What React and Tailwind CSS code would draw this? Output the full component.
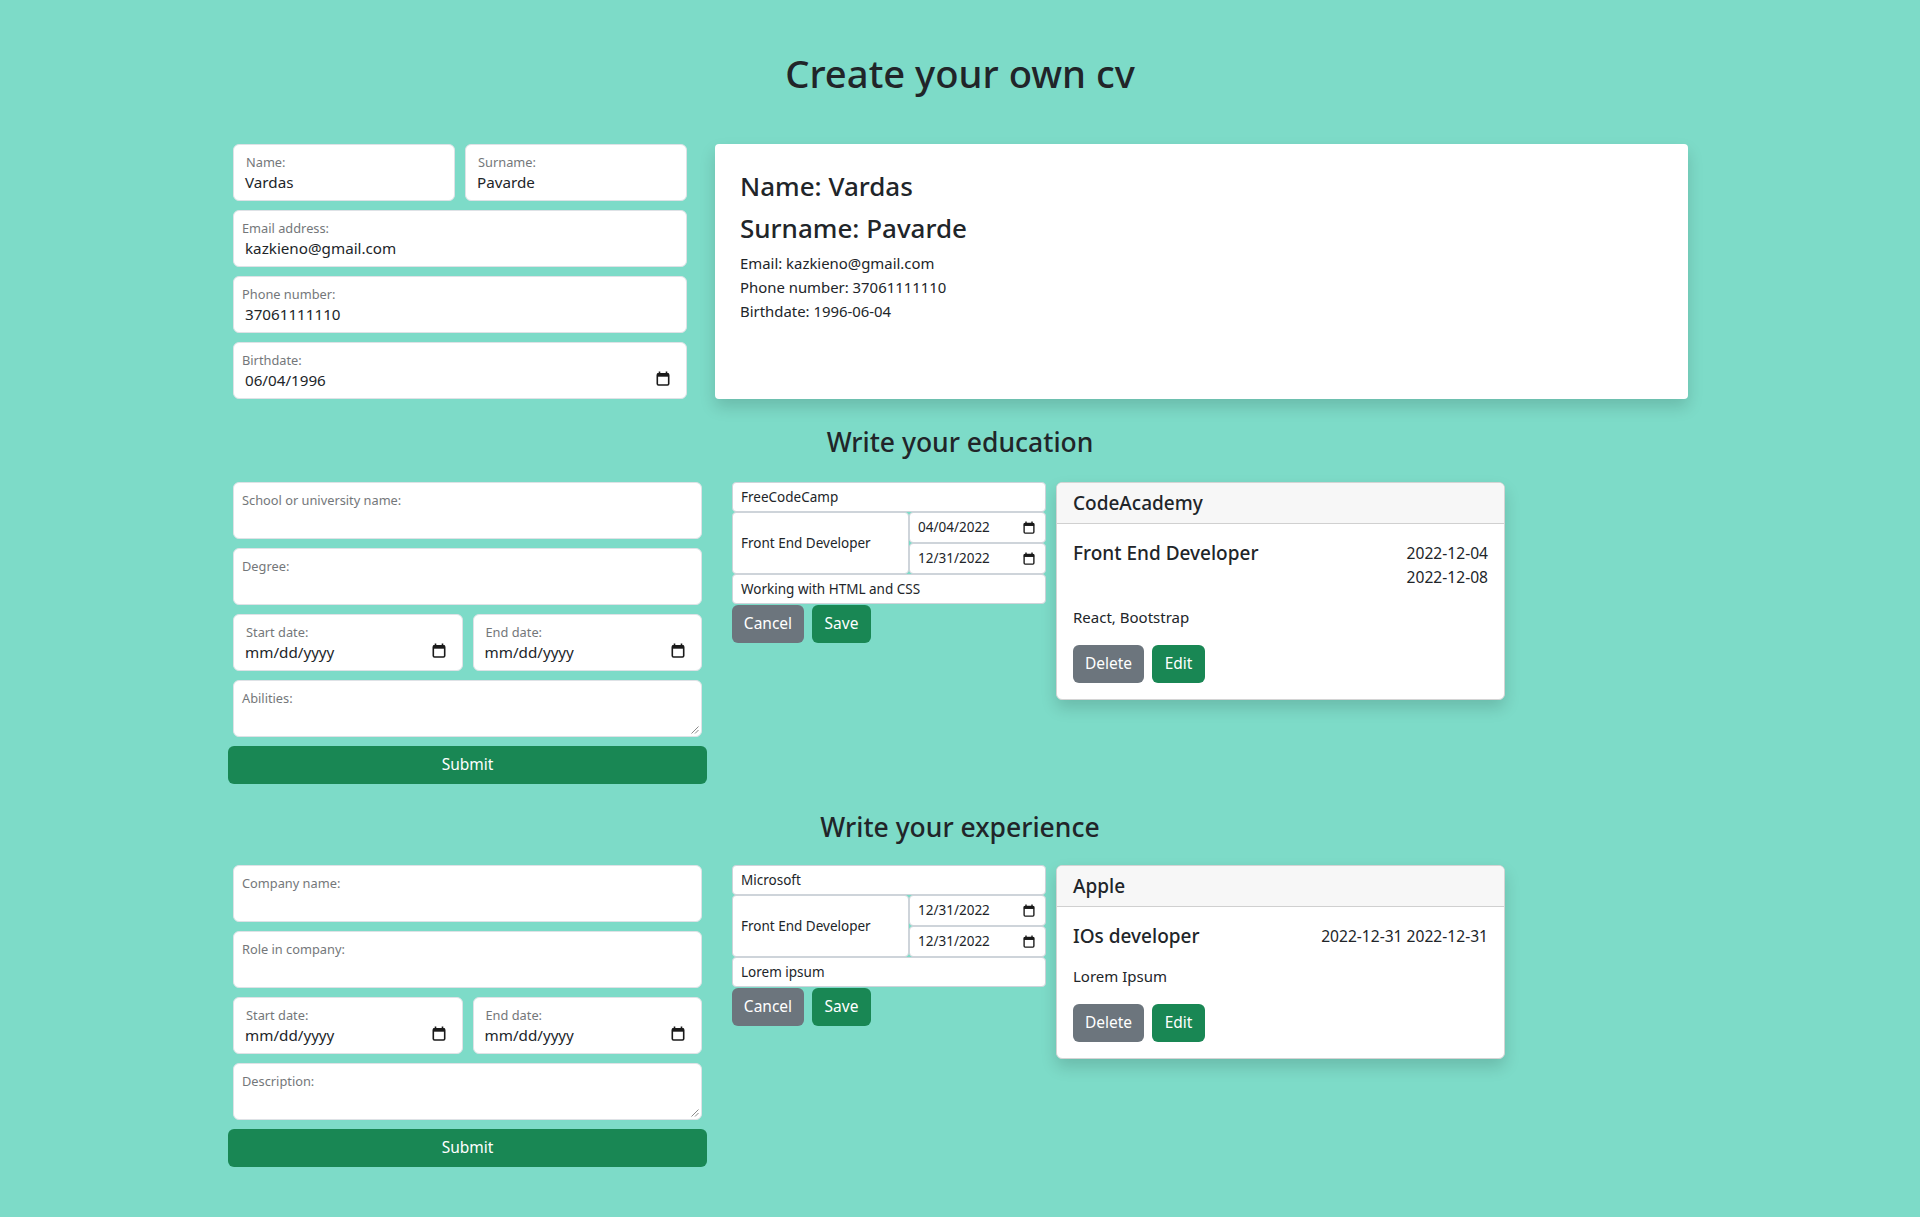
import React from "react";

const Cal = ({ size = 14 }) => (
  <svg width={size} height={size + 1} viewBox="0 0 14 15" fill="none">
    <path d="M3.5 0.5v2.5M10.5 0.5v2.5" stroke="#1a1a1a" strokeWidth="1.6" />
    <rect x="1.3" y="2.8" width="11.4" height="11.2" rx="1.2" stroke="#1a1a1a" strokeWidth="1.6" />
    <rect x="1" y="2.5" width="12" height="3.2" fill="#1a1a1a" />
  </svg>
);

const Grip = () => (
  <svg width="9" height="9" viewBox="0 0 9 9" className="absolute bottom-[2px] right-[2px]">
    <path d="M8.5 1.5L1.5 8.5M8.5 5L5 8.5" stroke="#8a8a8a" strokeWidth="1" />
  </svg>
);

// bootstrap style "form-floating" box
const Floating = ({ label, value, date, textarea, inset }) => (
  <div className="relative h-[57px] rounded-md border border-[#dee2e6] bg-white pt-[7px] pr-4">
    <div className={`${inset ? "pl-[12px]" : "pl-[8px]"} text-[12.8px] leading-5 text-[#74777a]`}>{label}</div>
    {value !== undefined && (
      <div className="flex items-center justify-between pl-[11px]">
        <span className="text-[15.2px] leading-5 text-[#212529]">{value}</span>
        {date && (
          <span className="-mt-[3px]">
            <Cal />
          </span>
        )}
      </div>
    )}
    {textarea && <Grip />}
  </div>
);

const EditForm = ({ title, role, d1, d2, desc }) => (
  <div className="w-[314px] text-[13.5px] text-[#212529]">
    <div className="flex h-[30px] items-center rounded border border-[#ced4da] bg-white px-2">{title}</div>
    <div className="flex h-[62px]">
      <div className="flex w-[177px] items-center rounded border border-[#ced4da] bg-white px-2">{role}</div>
      <div className="flex flex-1 flex-col">
        <div className="flex h-[31px] items-center justify-between rounded border border-[#ced4da] bg-white pl-2 pr-[10px]">
          <span>{d1}</span>
          <Cal size={12} />
        </div>
        <div className="flex h-[31px] items-center justify-between rounded border border-[#ced4da] bg-white pl-2 pr-[10px]">
          <span>{d2}</span>
          <Cal size={12} />
        </div>
      </div>
    </div>
    <div className="flex h-[30px] items-center rounded border border-[#ced4da] bg-white px-2">{desc}</div>
    <div className="mt-[1px] flex gap-2 text-[15.5px]">
      <button className="h-[38px] w-[72px] rounded-md bg-[#6c757d] text-white">Cancel</button>
      <button className="h-[38px] w-[59px] rounded-md bg-[#198754] text-white">Save</button>
    </div>
  </div>
);

const Entry = ({ head, title, dates, text }) => (
  <div className="w-[449px] overflow-hidden rounded-md border border-[#d4d4d4] bg-white text-[#212529] shadow-[0_8px_16px_rgba(0,0,0,0.15)]">
    <div className="flex h-[41px] items-center border-b border-[#d0d0d0] bg-[#f7f7f7] px-4 text-[19px] font-medium">
      {head}
    </div>
    <div className="px-4 pb-4 pt-[17px]">
      <div className="flex justify-between">
        <div className="text-[19px] font-medium leading-6">{title}</div>
        <div className="text-right text-[15.6px] leading-6">
          {dates.map((d) => (
            <div key={d}>{d}</div>
          ))}
        </div>
      </div>
      <p className="mt-4 text-[15px] leading-6">{text}</p>
      <div className="mt-4 flex gap-2 text-[15.5px]">
        <button className="h-[38px] w-[71px] rounded-md bg-[#6c757d] text-white">Delete</button>
        <button className="h-[38px] w-[53px] rounded-md bg-[#198754] text-white">Edit</button>
      </div>
    </div>
  </div>
);

const SectionForm = ({ first, second, third }) => (
  <div className="w-[479px]">
    <div className="flex flex-col gap-[9px] px-[5px]">
      <Floating label={first} />
      <Floating label={second} />
      <div className="grid grid-cols-2 gap-[10px]">
        <Floating label="Start date:" value="mm/dd/yyyy" date inset />
        <Floating label="End date:" value="mm/dd/yyyy" date inset />
      </div>
      <Floating label={third} textarea />
    </div>
    <button className="mt-[9px] h-[38px] w-full rounded-md bg-[#198754] text-[15.5px] text-white">Submit</button>
  </div>
);

export default function App() {
  return (
    <div className="min-h-[1217px] bg-[#7ddbc8] pb-10 pt-[49px] font-['Noto_Sans',sans-serif] text-[#212529]">
      <h1 className="text-center text-[38.2px] font-medium leading-[48px]">Create your own cv</h1>

      <div className="mx-auto w-[1464px]">
        {/* personal info */}
        <div className="mt-[47px] flex gap-[28px] pl-[5px]">
          <div className="flex w-[454px] flex-col gap-[9px]">
            <div className="grid grid-cols-2 gap-[10px]">
              <Floating label="Name:" value="Vardas" inset />
              <Floating label="Surname:" value="Pavarde" inset />
            </div>
            <Floating label="Email address:" value="kazkieno@gmail.com" />
            <Floating label="Phone number:" value="37061111110" />
            <Floating label="Birthdate:" value="06/04/1996" date />
          </div>
          <div className="h-[255px] w-[973px] rounded bg-white pl-[25px] pt-[25px] shadow-[0_8px_16px_rgba(0,0,0,0.15)]">
            <h3 className="text-[26px] font-medium leading-[34px]">Name: Vardas</h3>
            <h3 className="mt-2 text-[26px] font-medium leading-[34px]">Surname: Pavarde</h3>
            <div className="mt-[6px] text-[14.9px] leading-6">
              <p>Email: kazkieno@gmail.com</p>
              <p>Phone number: 37061111110</p>
              <p>Birthdate: 1996-06-04</p>
            </div>
          </div>
        </div>

        {/* education */}
        <h2 className="mt-[24px] text-center text-[26.5px] font-medium leading-[38px]">Write your education</h2>
        <div className="mt-[21px] flex items-start">
          <SectionForm first="School or university name:" second="Degree:" third="Abilities:" />
          <div className="ml-[25px]">
            <EditForm
              title="FreeCodeCamp"
              role="Front End Developer"
              d1="04/04/2022"
              d2="12/31/2022"
              desc="Working with HTML and CSS"
            />
          </div>
          <div className="ml-[10px]">
            <Entry
              head="CodeAcademy"
              title="Front End Developer"
              dates={["2022-12-04", "2022-12-08"]}
              text="React, Bootstrap"
            />
          </div>
        </div>

        {/* experience */}
        <h2 className="mt-[24px] text-center text-[26.5px] font-medium leading-[38px]">Write your experience</h2>
        <div className="mt-[19px] flex items-start">
          <SectionForm first="Company name:" second="Role in company:" third="Description:" />
          <div className="ml-[25px]">
            <EditForm
              title="Microsoft"
              role="Front End Developer"
              d1="12/31/2022"
              d2="12/31/2022"
              desc="Lorem ipsum"
            />
          </div>
          <div className="ml-[10px]">
            <Entry head="Apple" title="IOs developer" dates={["2022-12-31 2022-12-31"]} text="Lorem Ipsum" />
          </div>
        </div>
      </div>
    </div>
  );
}
